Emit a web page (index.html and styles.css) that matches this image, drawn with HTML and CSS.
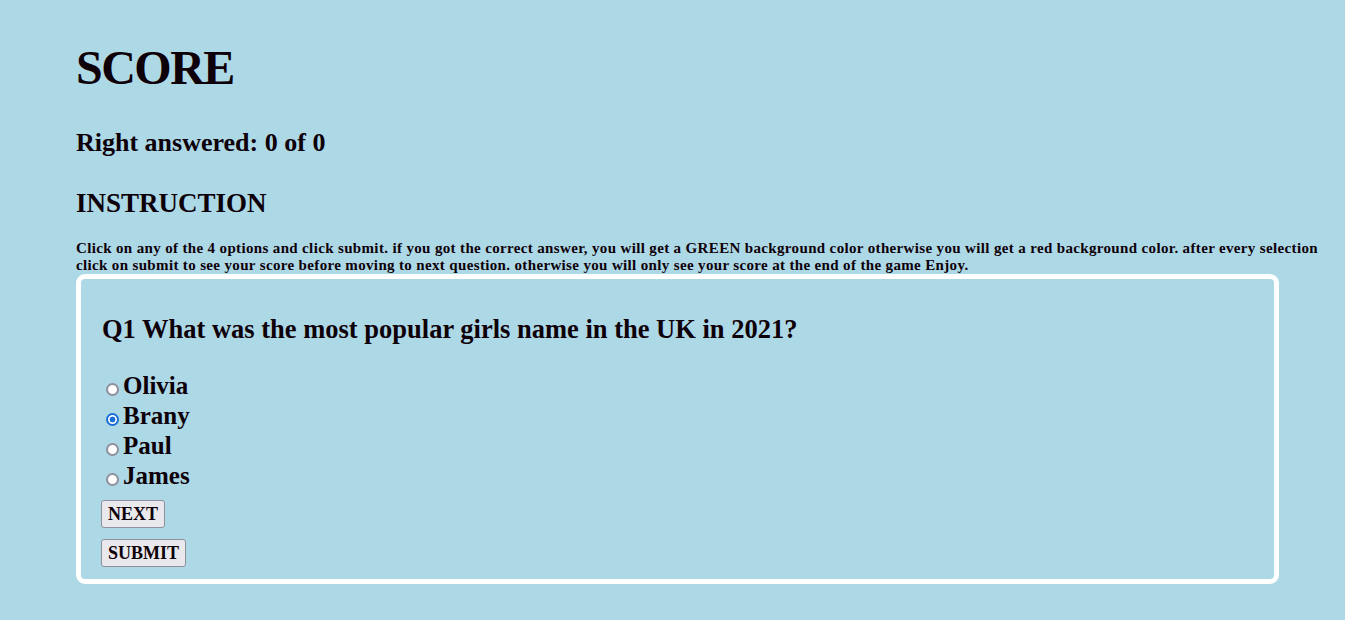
FILE: index.html
```html
<!DOCTYPE html>
<html>
<head>
<meta charset="utf-8">
<title>Quiz</title>
<link rel="stylesheet" href="styles.css">
</head>
<body>
<div class="page">
  <h1 class="title">SCORE</h1>
  <h2 class="score">Right answered: 0 of 0</h2>
  <h2 class="instr-title">INSTRUCTION</h2>
  <p class="instr">Click on any of the 4 options and click submit. if you got the correct answer, you will get a GREEN background color otherwise you will get a red background color. after every selection click on submit to see your score before moving to next question. otherwise you will only see your score at the end of the game Enjoy.</p>
  <div class="quiz">
    <h3 class="question">Q1 What was the most popular girls name in the UK in 2021?</h3>
    <div class="options">
      <label class="option"><input type="radio" name="q">Olivia</label>
      <label class="option"><input type="radio" name="q" checked>Brany</label>
      <label class="option"><input type="radio" name="q">Paul</label>
      <label class="option"><input type="radio" name="q">James</label>
    </div>
    <div class="buttons">
      <button class="btn">NEXT</button>
      <button class="btn">SUBMIT</button>
    </div>
  </div>
</div>
</body>
</html>
```
FILE: styles.css
```css
html, body {
  margin: 0;
  padding: 0;
  background: #add8e6;
}
body {
  font-family: "Liberation Serif", "Times New Roman", serif;
  font-weight: bold;
  color: #0d0008;
}
.page {
  padding: 38px 16px 0 76px;
}
.title {
  margin: 0;
  font-size: 48px;
  line-height: 60px;
  letter-spacing: -1.5px;
}
.score {
  margin: 30px 0 0;
  font-size: 26px;
  line-height: 30px;
}
.instr-title {
  margin: 29px 0 0;
  font-size: 27px;
  line-height: 32px;
}
.instr {
  margin: 21px 0 0;
  font-size: 15px;
  line-height: 17px;
  letter-spacing: 0.35px;
}
.quiz {
  border: 5px solid #fff;
  border-radius: 9px;
  padding: 35px 0 12px 20px;
  box-sizing: content-box;
  width: 1173px;
}
.question {
  margin: 0 0 0 1px;
  font-size: 26.5px;
  line-height: 30px;
}
.options {
  display: flex;
  flex-direction: column;
  margin-top: 27px;
}
.option {
  font-size: 25px;
  line-height: 30px;
}
.option input {
  appearance: none;
  -webkit-appearance: none;
  box-sizing: border-box;
  margin: 0 4px 0 5px;
  width: 13px;
  height: 13px;
  border: 2px solid #8f8f9d;
  border-radius: 50%;
  background: #fff;
  vertical-align: -2px;
}
.option input:checked {
  border-color: #1a6ed8;
  background: radial-gradient(circle, #1a6ed8 0 2.7px, #fff 3.2px);
}
.buttons {
  display: flex;
  flex-direction: column;
  align-items: flex-start;
  gap: 11px;
  margin-top: 9px;
}
.btn {
  font-family: inherit;
  font-weight: bold;
  font-size: 18px;
  height: 28px;
  padding: 0 6px;
  background: #e9e9ed;
  border: 1px solid #8f8f9d;
  border-radius: 3px;
  color: #0d0008;
}
```
